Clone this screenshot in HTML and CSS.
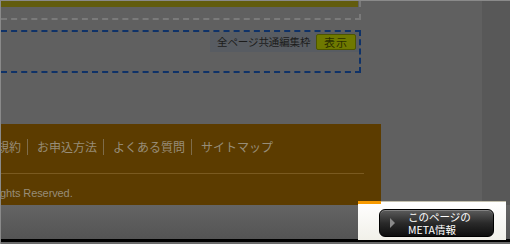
FILE: index.html
```html
<!DOCTYPE html>
<html lang="ja">
<head>
<meta charset="utf-8">
<title>META</title>
<link rel="stylesheet" href="styles.css">
</head>
<body>
<div class="screen">
  <div class="main">
    <div class="top-block"><div class="olive-bar"></div></div>
    <div class="edit-box">
      <div class="edit-label">
        <span class="edit-label-text">全ページ共通編集枠</span>
        <span class="show-btn">表示</span>
      </div>
    </div>
    <footer class="site-footer">
      <ul class="footer-nav">
        <li>規約</li>
        <li>お申込方法</li>
        <li>よくある質問</li>
        <li>サイトマップ</li>
      </ul>
      <div class="footer-rule"></div>
      <p class="copyright">ghts Reserved.</p>
    </footer>
  </div>
  <div class="side"></div>
  <div class="bottom-band"></div>
  <div class="meta-panel">
    <div class="meta-accent"></div>
    <div class="meta-btn">
      <span class="meta-arrow"></span>
      <span class="meta-text">このページの<br>META情報</span>
    </div>
  </div>
</div>
</body>
</html>
```

FILE: styles.css
```css
html, body {
  margin: 0;
  padding: 0;
  background: #606060;
}
.screen {
  position: relative;
  box-sizing: border-box;
  width: 510px;
  height: 244px;
  overflow: hidden;
  border-top: 1px solid #8a8a8a;
  border-left: 1px solid #8a8a8a;
  background: #606060;
  display: grid;
  grid-template-columns: 481px 1fr;
  grid-template-rows: 204px 1fr;
  font-family: "Noto Sans CJK JP", "Noto Sans", sans-serif;
}
.main {
  grid-column: 1;
  grid-row: 1;
  display: flex;
  flex-direction: column;
}
.side {
  grid-column: 2;
  grid-row: 1;
  background: #585858;
}
.top-block {
  box-sizing: border-box;
  width: 360px;
  height: 19px;
  border-right: 2px dashed #7a7a7a;
  border-bottom: 2px dashed #7a7a7a;
}
.olive-bar {
  width: 357px;
  height: 6px;
  background: #625c0e;
}
.edit-box {
  box-sizing: border-box;
  width: 360px;
  height: 43px;
  margin-top: 10px;
  border-top: 2px dashed #0f3268;
  border-right: 2px dashed #0f3268;
  border-bottom: 2px dashed #0f3268;
  display: flex;
  justify-content: flex-end;
  align-items: flex-start;
}
.edit-label {
  box-sizing: border-box;
  width: 149px;
  height: 20px;
  background: #585c62;
  display: flex;
  align-items: center;
  padding: 0 3px 0 7px;
  gap: 4px;
}
.edit-label-text {
  font-size: 10.5px;
  line-height: 14px;
  color: #1c1c1c;
  white-space: nowrap;
  letter-spacing: -0.1px;
}
.show-btn {
  box-sizing: border-box;
  margin-left: auto;
  width: 40px;
  height: 16px;
  border: 1px solid #4e5500;
  border-radius: 2px;
  background: #6f7900;
  color: #2a2e00;
  font-size: 11px;
  line-height: 14px;
  text-align: center;
  letter-spacing: 1px;
}
.site-footer {
  box-sizing: border-box;
  width: 380px;
  height: 81px;
  margin-top: 51px;
  background: #5c3c00;
  overflow: hidden;
  padding-top: 15px;
  color: #978d78;
}
.footer-nav {
  list-style: none;
  margin: 0 0 0 -4px;
  padding: 0;
  display: flex;
  font-size: 12px;
  line-height: 16px;
}
.footer-nav li {
  padding: 0 6px 0 9px;
  border-left: 1px solid #7e6c4a;
  white-space: nowrap;
}
.footer-nav li:first-child {
  border-left: none;
  padding-left: 0;
}
.footer-rule {
  width: 363px;
  height: 1px;
  margin-top: 18px;
  background: #7a5a20;
}
.copyright {
  margin: 13px 0 0 -1px;
  font-family: "Liberation Sans", Arial, sans-serif;
  font-size: 11px;
  line-height: 13px;
  letter-spacing: -0.1px;
  color: #978d78;
}
.bottom-band {
  grid-column: 1 / 3;
  grid-row: 2;
  margin-left: -1px;
  background:
    linear-gradient(#000, #000) 0 34px / 100% 3px no-repeat,
    linear-gradient(#646464, #545454) 0 0 / 100% 34px no-repeat,
    #6a6a6a;
}
.meta-panel {
  position: absolute;
  left: 357px;
  top: 200px;
  width: 148px;
  height: 38px;
  background: linear-gradient(#ffffff, #f1f0e9);
  border-top: 1px solid #c3c0ad;
}
.meta-accent {
  position: absolute;
  left: 0;
  top: -1px;
  width: 23px;
  height: 3px;
  background: #f79a00;
}
.meta-btn {
  position: absolute;
  left: 21px;
  top: 7px;
  box-sizing: border-box;
  width: 115px;
  height: 28px;
  border-radius: 6px;
  border: 1px solid #000;
  background: linear-gradient(#5c5c5c, #2a2a2a 50%, #0e0e0e);
  box-shadow: inset 0 1px 0 rgba(255,255,255,0.25);
  display: flex;
  align-items: center;
}
.meta-arrow {
  width: 0;
  height: 0;
  margin-left: 10px;
  border-top: 5px solid transparent;
  border-bottom: 5px solid transparent;
  border-left: 5px solid #8a8a8a;
}
.meta-text {
  margin-left: 13px;
  color: #ffffff;
  font-size: 10.5px;
  line-height: 13px;
  white-space: nowrap;
}
```
